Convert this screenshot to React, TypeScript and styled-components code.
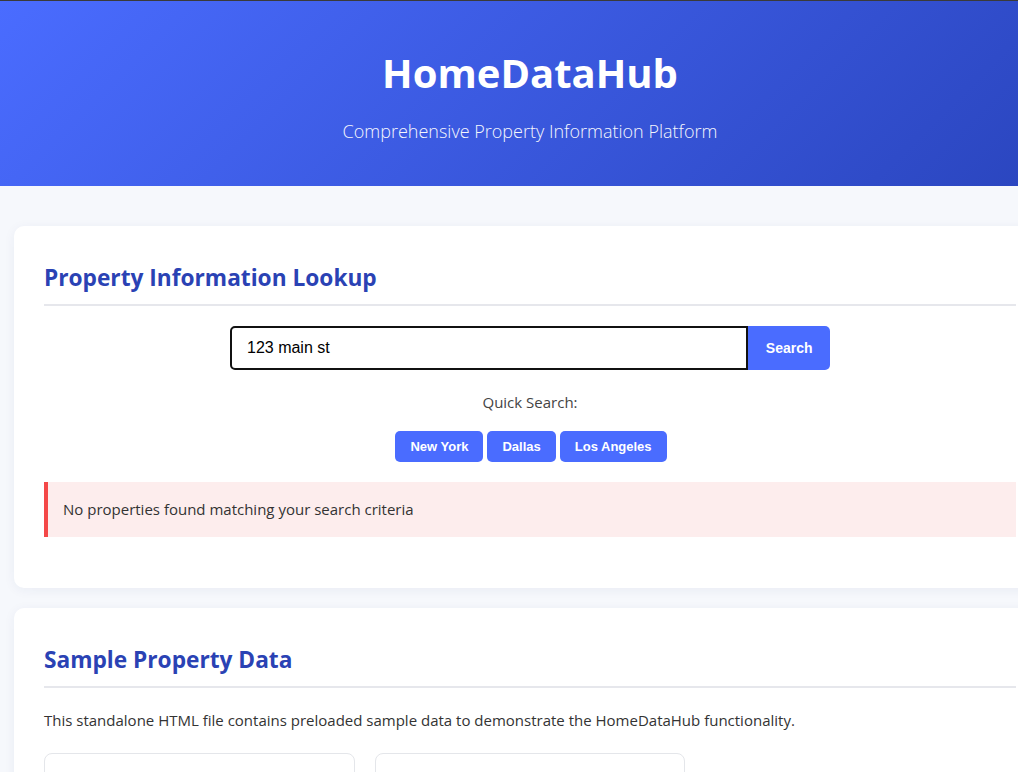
import React from 'react';
import styled, { createGlobalStyle } from 'styled-components';

const GlobalStyle = createGlobalStyle`
    html, body {
        margin: 0;
        padding: 0;
        overflow: hidden;
        background: #f6f8fc;
    }
    body {
        font-family: 'Open Sans', 'Noto Sans', 'Liberation Sans', sans-serif;
        color: #333;
        line-height: 1.6;
        border-top: 1px solid #3a3a3a;
    }
`;

const Page = styled.div`
    width: 1060px;
`;

const Header = styled.header`
    background: linear-gradient(135deg, #4a6cff 0%, #2a45be 100%);
    color: #fff;
    text-align: center;
    padding: 40px 20px;
    height: 185px;
    box-sizing: border-box;

    h1 {
        margin: 0 0 12px;
        font-size: 40px;
        line-height: 64px;
        font-weight: 700;
    }

    p {
        margin: 0;
        font-size: 18px;
        font-weight: 300;
        opacity: 0.95;
    }
`;

const Main = styled.main`
    padding: 40px 14px;
    display: flex;
    flex-direction: column;
    gap: 20px;
`;

const Card = styled.section`
    background: #fff;
    border-radius: 10px;
    box-shadow: 0 2px 12px rgba(30, 50, 120, 0.06);
    padding: 30px;
`;

const Title = styled.h2`
    margin: 0 0 20px;
    padding: 3px 0 7px;
    border-bottom: 2px solid #e6e7ec;
    color: #2a42b4;
    font-size: 22.7px;
    line-height: 38px;
    font-weight: 700;
`;

const SearchBar = styled.div`
    display: flex;
    max-width: 600px;
    margin: 0 auto;
`;

const Input = styled.input`
    flex: 1;
    height: 44px;
    box-sizing: border-box;
    border: 2px solid #111;
    border-radius: 5px 0 0 5px;
    padding: 0 15px;
    font-family: 'Liberation Sans', Arial, sans-serif;
    font-size: 16px;
    color: #000;
    outline: none;
`;

const Button = styled.button<{ $small?: boolean }>`
    background: #4a6cff;
    color: #fff;
    border: none;
    font-family: 'Liberation Sans', Arial, sans-serif;
    font-weight: 700;
    cursor: pointer;
    font-size: ${p => (p.$small ? '13px' : '14px')};
    padding: ${p => (p.$small ? '0 15px' : '0 17.5px')};
    height: ${p => (p.$small ? '31px' : '44px')};
    border-radius: ${p => (p.$small ? '5px' : '0 5px 5px 0')};
`;

const Quick = styled.div`
    text-align: center;
    margin-top: 20px;

    span {
        display: block;
        font-size: 15px;
        color: #444;
        margin-bottom: 17px;
    }
`;

const QuickRow = styled.div`
    display: flex;
    justify-content: center;
    gap: 4px;
    padding-left: 2px;
`;

const ErrorBox = styled.div`
    margin: 20px 0 21px;
    background: #fdeded;
    border-left: 4px solid #f44848;
    padding: 15px;
    font-size: 15px;
    line-height: 25px;
    color: #333;
`;

const Intro = styled.p`
    margin: 0 0 20px;
    font-size: 15px;
    line-height: 25px;
    color: #333;
`;

const Grid = styled.div`
    display: grid;
    grid-template-columns: repeat(3, 1fr);
    gap: 20px;
`;

const PropertyCard = styled.div`
    border: 1px solid #e4e6ea;
    border-radius: 8px;
    height: 200px;
    background: #fff;
`;

export default function App() {
    return (
        <Page>
            <GlobalStyle />
            <Header>
                <h1>HomeDataHub</h1>
                <p>Comprehensive Property Information Platform</p>
            </Header>
            <Main>
                <Card>
                    <Title>Property Information Lookup</Title>
                    <SearchBar>
                        <Input defaultValue="123 main st" spellCheck={false} />
                        <Button>Search</Button>
                    </SearchBar>
                    <Quick>
                        <span>Quick Search:</span>
                        <QuickRow>
                            <Button $small>New York</Button>
                            <Button $small>Dallas</Button>
                            <Button $small>Los Angeles</Button>
                        </QuickRow>
                    </Quick>
                    <ErrorBox>No properties found matching your search criteria</ErrorBox>
                </Card>
                <Card>
                    <Title>Sample Property Data</Title>
                    <Intro>
                        This standalone HTML file contains preloaded sample data to demonstrate the HomeDataHub functionality.
                    </Intro>
                    <Grid>
                        <PropertyCard />
                        <PropertyCard />
                    </Grid>
                </Card>
            </Main>
        </Page>
    );
}
